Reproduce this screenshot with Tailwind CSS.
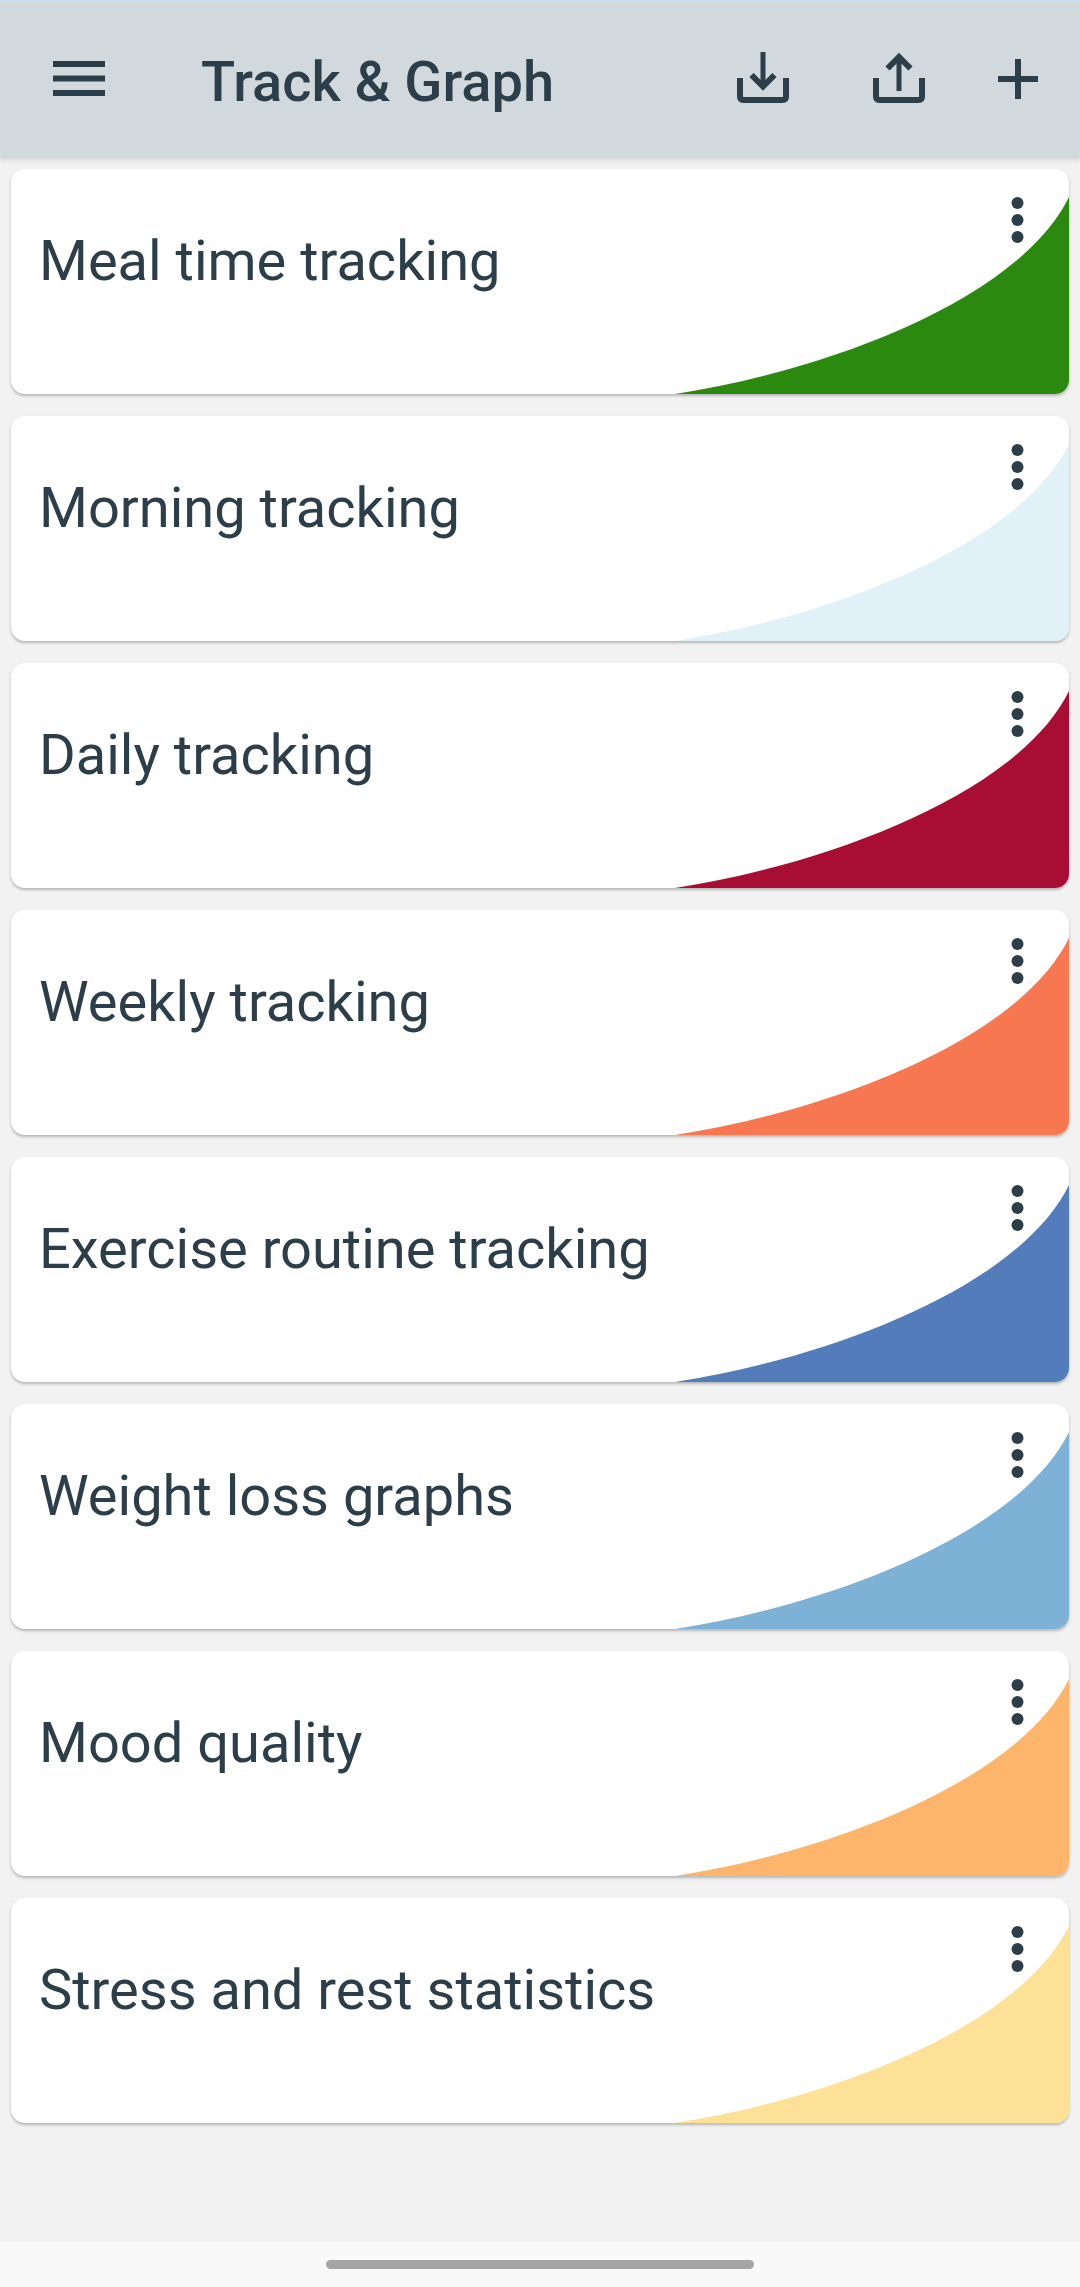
<!DOCTYPE html>
<html><head><meta charset="utf-8"><script src="https://cdn.jsdelivr.net/npm/@tailwindcss/browser@4"></script></head>
<body class="m-0">
<div class="w-[1080px] h-[2287px] bg-[#f2f2f2] flex flex-col font-['Roboto',sans-serif] text-[#2c3e4a] overflow-hidden">
  <header class="relative z-10 h-[158px] shrink-0 bg-[#d2d9dc] border-t-2 border-[#c3deef] shadow-[0_2px_5px_rgba(0,0,0,0.12)] flex items-center">
    <svg class="ml-[53px] mb-[3px] w-[52px] h-[35px]" viewBox="0 0 52 35" fill="#2c3e4a"><rect x="0" y="0" width="52" height="6"/><rect x="0" y="14.500" width="52" height="6"/><rect x="0" y="29" width="52" height="6"/></svg>
    <h1 class="ml-[96px] pt-[4px] text-[56px] font-medium leading-none">Track &amp; Graph</h1>
    <svg class="absolute left-[737px] top-[50px] w-[52px] h-[52px]" viewBox="0 0 52 52" fill="none" stroke="#2c3e4a" stroke-width="6"><path stroke-width="5" d="M26 0V34"/><path d="M14.500 23L26 34.500L37.500 23"/><path d="M3 26V44.500Q3 48 6.500 48H45.500Q49 48 49 44.500V26"/></svg>
    <svg class="absolute left-[873px] top-[50px] w-[52px] h-[52px]" viewBox="0 0 52 52" fill="none" stroke="#2c3e4a" stroke-width="6"><path stroke-width="5" d="M26 39V5"/><path d="M14.500 16.500L26 5L37.500 16.500"/><path d="M3 26V44.500Q3 48 6.500 48H45.500Q49 48 49 44.500V26"/></svg>
    <svg class="absolute left-[998px] top-[57px] w-[40px] h-[40px]" viewBox="0 0 40 40" fill="none" stroke="#2c3e4a" stroke-width="6"><path d="M20 0V40M0 20H40"/></svg>
  </header>
  <main class="flex-1 flex flex-col gap-[22px] pt-[11px] px-[11px]">
    <article class="relative h-[225px] bg-white rounded-[14px] shadow-[0_2px_3px_rgba(0,0,0,0.25)] overflow-hidden">
      <svg class="absolute right-0 bottom-0 w-[394px] h-[197px]" viewBox="0 0 394 197" fill="#2b890f"><path d="M0 197C160 172 345 100 394 0V197Z"/></svg>
      <svg class="absolute left-[1000px] top-[28px] w-[14px] h-[46px]" viewBox="0 0 14 46" fill="#2c3e4a"><circle cx="6.500" cy="6" r="6"/><circle cx="6.500" cy="23" r="6"/><circle cx="6.500" cy="40" r="6"/></svg>
      <h2 class="absolute left-[28px] top-[64px] text-[56px] leading-none font-normal">Meal time tracking</h2>
    </article>
    <article class="relative h-[225px] bg-white rounded-[14px] shadow-[0_2px_3px_rgba(0,0,0,0.25)] overflow-hidden">
      <svg class="absolute right-0 bottom-0 w-[394px] h-[197px]" viewBox="0 0 394 197" fill="#e0f2f7"><path d="M0 197C160 172 345 100 394 0V197Z"/></svg>
      <svg class="absolute left-[1000px] top-[28px] w-[14px] h-[46px]" viewBox="0 0 14 46" fill="#2c3e4a"><circle cx="6.500" cy="6" r="6"/><circle cx="6.500" cy="23" r="6"/><circle cx="6.500" cy="40" r="6"/></svg>
      <h2 class="absolute left-[28px] top-[64px] text-[56px] leading-none font-normal">Morning tracking</h2>
    </article>
    <article class="relative h-[225px] bg-white rounded-[14px] shadow-[0_2px_3px_rgba(0,0,0,0.25)] overflow-hidden">
      <svg class="absolute right-0 bottom-0 w-[394px] h-[197px]" viewBox="0 0 394 197" fill="#a80e33"><path d="M0 197C160 172 345 100 394 0V197Z"/></svg>
      <svg class="absolute left-[1000px] top-[28px] w-[14px] h-[46px]" viewBox="0 0 14 46" fill="#2c3e4a"><circle cx="6.500" cy="6" r="6"/><circle cx="6.500" cy="23" r="6"/><circle cx="6.500" cy="40" r="6"/></svg>
      <h2 class="absolute left-[28px] top-[64px] text-[56px] leading-none font-normal">Daily tracking</h2>
    </article>
    <article class="relative h-[225px] bg-white rounded-[14px] shadow-[0_2px_3px_rgba(0,0,0,0.25)] overflow-hidden">
      <svg class="absolute right-0 bottom-0 w-[394px] h-[197px]" viewBox="0 0 394 197" fill="#f77750"><path d="M0 197C160 172 345 100 394 0V197Z"/></svg>
      <svg class="absolute left-[1000px] top-[28px] w-[14px] h-[46px]" viewBox="0 0 14 46" fill="#2c3e4a"><circle cx="6.500" cy="6" r="6"/><circle cx="6.500" cy="23" r="6"/><circle cx="6.500" cy="40" r="6"/></svg>
      <h2 class="absolute left-[28px] top-[64px] text-[56px] leading-none font-normal">Weekly tracking</h2>
    </article>
    <article class="relative h-[225px] bg-white rounded-[14px] shadow-[0_2px_3px_rgba(0,0,0,0.25)] overflow-hidden">
      <svg class="absolute right-0 bottom-0 w-[394px] h-[197px]" viewBox="0 0 394 197" fill="#527dba"><path d="M0 197C160 172 345 100 394 0V197Z"/></svg>
      <svg class="absolute left-[1000px] top-[28px] w-[14px] h-[46px]" viewBox="0 0 14 46" fill="#2c3e4a"><circle cx="6.500" cy="6" r="6"/><circle cx="6.500" cy="23" r="6"/><circle cx="6.500" cy="40" r="6"/></svg>
      <h2 class="absolute left-[28px] top-[64px] text-[56px] leading-none font-normal">Exercise routine tracking</h2>
    </article>
    <article class="relative h-[225px] bg-white rounded-[14px] shadow-[0_2px_3px_rgba(0,0,0,0.25)] overflow-hidden">
      <svg class="absolute right-0 bottom-0 w-[394px] h-[197px]" viewBox="0 0 394 197" fill="#7db2d6"><path d="M0 197C160 172 345 100 394 0V197Z"/></svg>
      <svg class="absolute left-[1000px] top-[28px] w-[14px] h-[46px]" viewBox="0 0 14 46" fill="#2c3e4a"><circle cx="6.500" cy="6" r="6"/><circle cx="6.500" cy="23" r="6"/><circle cx="6.500" cy="40" r="6"/></svg>
      <h2 class="absolute left-[28px] top-[64px] text-[56px] leading-none font-normal">Weight loss graphs</h2>
    </article>
    <article class="relative h-[225px] bg-white rounded-[14px] shadow-[0_2px_3px_rgba(0,0,0,0.25)] overflow-hidden">
      <svg class="absolute right-0 bottom-0 w-[394px] h-[197px]" viewBox="0 0 394 197" fill="#fdb56b"><path d="M0 197C160 172 345 100 394 0V197Z"/></svg>
      <svg class="absolute left-[1000px] top-[28px] w-[14px] h-[46px]" viewBox="0 0 14 46" fill="#2c3e4a"><circle cx="6.500" cy="6" r="6"/><circle cx="6.500" cy="23" r="6"/><circle cx="6.500" cy="40" r="6"/></svg>
      <h2 class="absolute left-[28px] top-[64px] text-[56px] leading-none font-normal">Mood quality</h2>
    </article>
    <article class="relative h-[225px] bg-white rounded-[14px] shadow-[0_2px_3px_rgba(0,0,0,0.25)] overflow-hidden">
      <svg class="absolute right-0 bottom-0 w-[394px] h-[197px]" viewBox="0 0 394 197" fill="#fde196"><path d="M0 197C160 172 345 100 394 0V197Z"/></svg>
      <svg class="absolute left-[1000px] top-[28px] w-[14px] h-[46px]" viewBox="0 0 14 46" fill="#2c3e4a"><circle cx="6.500" cy="6" r="6"/><circle cx="6.500" cy="23" r="6"/><circle cx="6.500" cy="40" r="6"/></svg>
      <h2 class="absolute left-[28px] top-[64px] text-[56px] leading-none font-normal">Stress and rest statistics</h2>
    </article>
  </main>
  <footer class="h-[45px] shrink-0 bg-[#f9f9f9] flex items-center justify-center"><div class="w-[428px] h-[9px] rounded-full bg-[#a5a5a5]"></div></footer>
</div>
</body></html>
